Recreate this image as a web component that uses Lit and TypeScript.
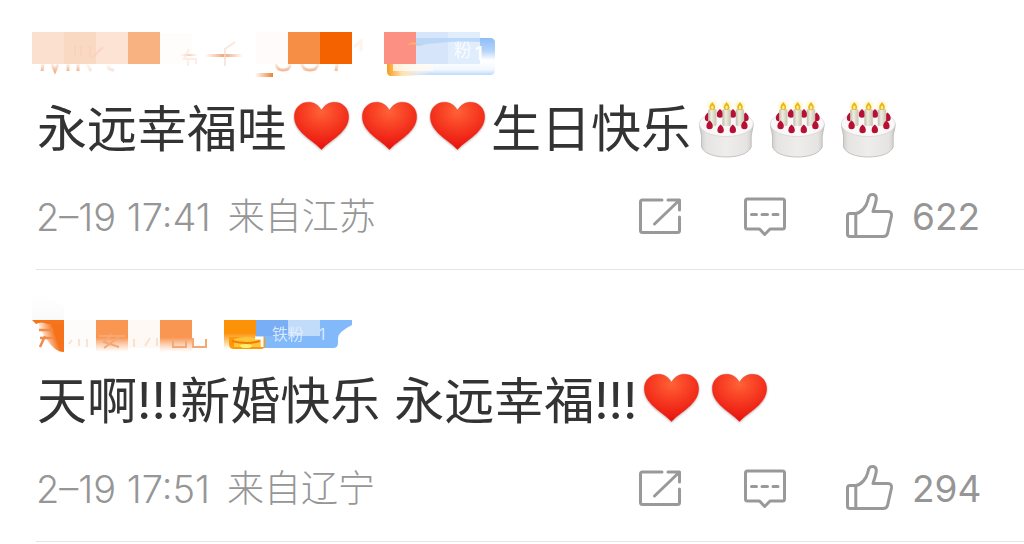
import { LitElement, html, svg, css } from "lit";
import { customElement, property } from "lit/decorators.js";

type Part = string | { emoji: "heart" | "cake"; count: number };

interface Comment {
  author: "first" | "second";
  parts: Part[];
  time: string;
  place: string;
  likes: number;
}

const comments: Comment[] = [
  {
    author: "first",
    parts: ["永远幸福哇", { emoji: "heart", count: 3 }, "生日快乐", { emoji: "cake", count: 3 }],
    time: "2–19 17:41",
    place: "来自江苏",
    likes: 622,
  },
  {
    author: "second",
    parts: ["天啊!!!新婚快乐 永远幸福!!!", { emoji: "heart", count: 2 }],
    time: "2–19 17:51",
    place: "来自辽宁",
    likes: 294,
  },
];

const heart = () => html`<svg class="emoji heart" viewBox="0 0 68 66" role="img" aria-label="红心">
    <defs>
      <radialGradient id="h" cx="0.5" cy="0.2" r="0.75">
        <stop offset="0" stop-color="#ff6236" />
        <stop offset="0.5" stop-color="#f63a22" />
        <stop offset="1" stop-color="#e9150f" />
      </radialGradient>
      <filter id="s" x="-10%" y="-10%" width="120%" height="125%">
        <feDropShadow dx="0" dy="1" stdDeviation="0.8" flood-color="#000" flood-opacity="0.3" />
      </filter>
    </defs>
    <path filter="url(#s)" fill="url(#h)" stroke="#d9261a" stroke-opacity="0.6" stroke-width="0.6"
      d="M34.500 14.500C31.500 8.500 26.500 6.200 21.500 6.200 13 6.200 7.300 12.500 7.300 20.500 7.300 36 25 43.500 34.500 53.500 44 43.500 61.700 36 61.700 20.500 61.700 12.500 56 6.200 47.500 6.200 42.500 6.200 37.500 8.500 34.500 14.500Z" />
  </svg>`;

const cherry = (x: number, y: number) => svg`
  <path fill="#b80f35" d="M${x} ${y - 4.5}C${x + 2} ${y - 3} ${x + 3.2} ${y - 1} ${x + 3.2} ${y + 1}A3.200 3.200 0 0 1 ${x - 3.2} ${y + 1}C${x - 3.2} ${y - 1} ${x - 2} ${y - 3} ${x} ${y - 4.5}Z" />`;

const candle = (x: number) => svg`
  <circle cx=${x} cy="10" r="7" fill="url(#g)" />
  <rect x=${x - 4.2} y="13" width="8.400" height="17" rx="1.500" fill="url(#w)" />
  <path fill="#e9b51c" d="M${x} 6C${x + 2} 8.500 ${x + 2.8} 10 ${x + 2.8} 11.200A2.800 2.800 0 0 1 ${x - 2.8} 11.200C${x - 2.8} 10 ${x - 2} 8.500 ${x} 6Z" />
  <ellipse cx=${x} cy="11.500" rx="1.200" ry="2" fill="#ffee86" />`;

const cake = () => html`<svg class="emoji cake" viewBox="0 0 71 66" role="img" aria-label="蛋糕">
    <defs>
      <linearGradient id="b" x1="0" x2="1">
        <stop offset="0" stop-color="#c9c7c4" />
        <stop offset="0.12" stop-color="#e6e4e2" />
        <stop offset="0.5" stop-color="#efedeb" />
        <stop offset="0.88" stop-color="#e6e4e2" />
        <stop offset="1" stop-color="#c9c7c4" />
      </linearGradient>
      <linearGradient id="w" x1="0" x2="1">
        <stop offset="0" stop-color="#bfbcab" />
        <stop offset="0.4" stop-color="#efeddf" />
        <stop offset="1" stop-color="#c6c3b1" />
      </linearGradient>
      <radialGradient id="g">
        <stop offset="0" stop-color="#ffe873" stop-opacity="0.8" />
        <stop offset="1" stop-color="#fff3a8" stop-opacity="0" />
      </radialGradient>
    </defs>
    <path fill="url(#b)" stroke="#b9b6b4" stroke-width="0.8"
      d="M8.500 28C8.500 32 10 36 10.500 40V51C13 57.500 23 61 35.300 61S57.500 57.500 60.200 51V40C60.700 36 62.200 32 62.200 28Z" />
    <ellipse cx="35.300" cy="28" rx="27" ry="12.500" fill="#f9f8f8" stroke="#d5d3d2" stroke-width="0.7" />
    ${cherry(17, 21)}${cherry(29, 17.5)}${cherry(42, 17.5)}${cherry(54.5, 21)}
    ${candle(21.3)}${candle(35.6)}${candle(49)}
    ${cherry(18.6, 29)}${cherry(29.6, 33)}${cherry(41.8, 33)}${cherry(53.4, 29)}
  </svg>`;

const firstAuthor = () => html`
  <svg class="mosaic" viewBox="32 16 512 64" role="img" aria-label="用户昵称已打码">
    <defs>
      <linearGradient id="badge" x1="0" x2="0" y1="0" y2="1">
        <stop offset="0" stop-color="#8ebdf5" />
        <stop offset="0.35" stop-color="#b5d4f9" />
        <stop offset="0.6" stop-color="#ffffff" />
        <stop offset="0.85" stop-color="#f2f8ff" />
        <stop offset="1" stop-color="#bedaf9" />
      </linearGradient>
      <linearGradient id="gold" x1="0" x2="1">
        <stop offset="0" stop-color="#f79b1f" />
        <stop offset="0.35" stop-color="#ffe2ae" />
        <stop offset="1" stop-color="#fff" stop-opacity="0" />
      </linearGradient>
      <linearGradient id="dash" x1="0" x2="1">
        <stop offset="0" stop-color="#f0a77b" stop-opacity="0" />
        <stop offset="0.5" stop-color="#f0a77b" />
        <stop offset="1" stop-color="#f0a77b" stop-opacity="0" />
      </linearGradient>
      <linearGradient id="under" x1="0" x2="1">
        <stop offset="0" stop-color="#ec8038" stop-opacity="0" />
        <stop offset="1" stop-color="#ec8038" />
      </linearGradient>
      <linearGradient id="smear" gradientUnits="userSpaceOnUse" x1="0" x2="0" y1="63" y2="71">
        <stop offset="0" stop-color="#f6bd98" stop-opacity="0.1" />
        <stop offset="1" stop-color="#f4b48c" />
      </linearGradient>
    </defs>
    <g fill="none" stroke="url(#smear)" stroke-width="3">
      <path d="M42 71L43 64M52 64L55 71L58 64M68 71L68 64M78 71L78 64" />
      <path d="M87 64L91 71M108 65Q108 70 114 70" opacity="0.4" />
      <path d="M276 64Q277 70 283 70Q290 70 290 64M302 64Q303 70 310 70Q317 70 318 64M336 71L337 64" />
    </g>
    <rect x="32" y="32" width="32" height="32" fill="#fbdfcf" />
    <rect x="64" y="32" width="32" height="32" fill="#fad9c2" />
    <rect x="96" y="32" width="32" height="32" fill="#fde3d4" />
    <rect x="128" y="32" width="32" height="32" fill="#f8b180" />
    <rect x="160" y="33" width="32" height="31" fill="#fffdfc" />
    <path d="M75 46V56M81 46V56M90 46V57M103 47L92 58" fill="none" stroke="#f8cdb2" stroke-width="2" opacity="0.6" />
    <rect x="180" y="54" width="18" height="2" fill="url(#dash)" opacity="0.5" />
    <path d="M189 49L184 59H196V64M188 60V66" fill="none" stroke="#fae3d6" stroke-width="2" opacity="0.6" />
    <rect x="205" y="54" width="38" height="3" fill="url(#dash)" />
    <path d="M235 42L225 49V66" fill="none" stroke="#f8dccb" stroke-width="2" opacity="0.7" />
    <rect x="255" y="73" width="18" height="4" fill="url(#under)" />
    <rect x="256" y="32" width="32" height="32" fill="#fffbfb" />
    <rect x="288" y="32" width="32" height="32" fill="#f78e45" />
    <rect x="320" y="32" width="32" height="32" fill="#f46200" />
    <path d="M354 47L361 41V51" fill="none" stroke="#fef4ee" stroke-width="3" />
    <path d="M387 38H490Q495 38 495 43V70Q495 75 490 75H392Q387 75 387 70Z" fill="url(#badge)" />
    <path d="M387 62H430V76H391Q387 76 387 71Z" fill="url(#gold)" />
    <rect x="393" y="60" width="40" height="11" fill="#fffaf3" opacity="0.8" />
    <rect x="384" y="32" width="32" height="32" fill="#fc9082" />
    <rect x="416" y="32" width="32" height="32" fill="#d6e5fa" />
    <rect x="448" y="32" width="32" height="32" fill="#e0edfd" />
    <path d="M407 45Q414 39 422 46Q414 43 407 45Z" fill="#ffb26b" />
    <path d="M416 38H480V42Q448 40 416 46Z" fill="#b4d3f8" opacity="0.8" />
    <g fill="#fff" font-size="18">
      <text x="454" y="57" font-family="Noto Sans CJK SC, sans-serif" opacity="0.8">粉</text>
      <text x="475" y="60" font-family="Inter, sans-serif" font-weight="600">1</text>
    </g>
  </svg>`;

const secondAuthor = () => html`
  <svg class="mosaic" viewBox="32 16 512 64" role="img" aria-label="用户昵称已打码">
    <defs>
      <linearGradient id="o" x1="0" x2="0" y1="0" y2="1">
        <stop offset="0.55" stop-color="#f99652" />
        <stop offset="1" stop-color="#fbb382" stop-opacity="0" />
      </linearGradient>
      <linearGradient id="y" x1="0" x2="0" y1="0" y2="1">
        <stop offset="0" stop-color="#fb9208" />
        <stop offset="0.45" stop-color="#fb9208" />
        <stop offset="1" stop-color="#fb9208" stop-opacity="0" />
      </linearGradient>
      <linearGradient id="r" x1="0" x2="1" y1="0.7" y2="0.3">
        <stop offset="0.1" stop-color="#f5721a" stop-opacity="0" />
        <stop offset="0.65" stop-color="#f5721a" />
      </linearGradient>
      <linearGradient id="f" x1="0" x2="0" y1="0" y2="1">
        <stop offset="0" stop-color="#fff" />
        <stop offset="1" stop-color="#fafafa" />
      </linearGradient>
    </defs>
    <path d="M32 20L64 34V48H32Z" fill="url(#f)" />
    <rect x="64" y="48" width="32" height="28" fill="#fefcfa" />
    <rect x="128" y="48" width="32" height="28" fill="#fef9f5" />
    <path d="M39 48H64V80C57 80 52 75 48 69L39 56Z" fill="url(#r)" />
    <path d="M32 48H64V52H48Q41 49 36 52Z" fill="#f5741c" />
    <path d="M39 58H53M40 66H54M45 64L40 75" stroke="#f28a48" stroke-width="2.500" fill="none" />
    <rect x="96" y="48" width="32" height="32" fill="url(#o)" />
    <rect x="160" y="48" width="32" height="32" fill="url(#o)" />
    <g fill="none" stroke="#f5a873" stroke-width="2">
      <path d="M99 64H125M112 62L104 70L119 75M119 65L104 76" />
      <path d="M173 66V76M173 75H186M186 67V76M193 66V76M193 75H206M206 67V76" />
      <path d="M79 67V74M87 67V75M72 68L69 72M134 67V75M150 66L145 74M157 66V74" opacity="0.3" />
    </g>
    <path d="M256 48H352V53Q338 60 338 66V71Q338 76 333 76H264L256 68Z" fill="#82b9fa" />
    <rect x="256" y="48" width="32" height="16" fill="#77aef5" />
    <rect x="288" y="48" width="32" height="16" fill="#c1dbfb" />
    <rect x="224" y="48" width="32" height="29" fill="url(#y)" />
    <path d="M229 65H265V73Q265 77 261 77H234Q229 77 229 72Z" fill="#ff9905" />
    <path d="M234 67Q247 63 260 67V75H234Z" fill="#ffc53a" />
    <ellipse cx="246" cy="74" rx="6" ry="2" fill="#fff06a" />
    <path d="M232 69Q247 73 260 69" stroke="#f47b00" stroke-width="2" fill="none" />
    <path d="M255 66H262V75" stroke="#fff" stroke-width="3" fill="none" />
    <g fill="#e6f1fe" font-size="16" opacity="0.85">
      <text x="272" y="68" font-family="Noto Sans CJK SC, sans-serif">铁粉</text>
      <text x="319" y="68" font-family="Inter, sans-serif">1</text>
    </g>
  </svg>`;

@customElement("comment-item")
class CommentItem extends LitElement {
  @property({ attribute: false }) comment!: Comment;

  static styles = css`
    :host {
      display: block;
      font-family: Inter, "Noto Sans CJK SC", sans-serif;
    }
    .mosaic {
      display: block;
      width: 512px;
      height: 64px;
      margin-left: 32px;
    }
    .body {
      margin: 16px 37px 0;
      font-size: 50px;
      line-height: 66px;
      color: #333;
      font-weight: 400;
    }
    .emoji {
      display: inline-block;
      vertical-align: top;
      height: 66px;
    }
    .heart {
      width: 68px;
    }
    .cake {
      width: 71px;
    }
    .footer {
      display: flex;
      align-items: center;
      min-height: 56px;
      margin: 27px 0 0 36px;
      padding: 0 42px 24px 0;
      border-bottom: 1px solid #e4e4e4;
      color: #969696;
    }
    .meta {
      display: flex;
      align-items: center;
      gap: 17px;
      font-size: 37px;
      line-height: 56px;
      font-weight: 300;
    }
    .time {
      font-size: 38px;
    }
    .actions {
      display: flex;
      align-items: center;
      gap: 57px;
      margin-left: auto;
    }
    .action {
      display: flex;
      align-items: center;
      gap: 18px;
      padding: 0;
      border: 0;
      background: none;
      color: inherit;
      font: inherit;
      font-size: 37px;
      line-height: 48px;
      cursor: pointer;
    }
    .icon {
      display: block;
      width: 48px;
      height: 48px;
      overflow: visible;
      fill: none;
      stroke: #999;
      stroke-width: 3;
      stroke-linecap: round;
      stroke-linejoin: round;
    }
    .count {
      min-width: 70px;
      text-align: left;
    }
  `;

  render() {
    const c = this.comment;
    return html`
      <article>
        ${c.author === "first" ? firstAuthor() : secondAuthor()}
        <div class="body">${c.parts.map((p) =>
          typeof p === "string"
            ? p
            : Array.from({ length: p.count }, () => (p.emoji === "heart" ? heart() : cake()))
        )}</div>
        <div class="footer">
          <div class="meta"><time class="time">${c.time}</time><span>${c.place}</span></div>
          <div class="actions">
            <button class="action" type="button" aria-label="转发">
              <svg class="icon" viewBox="0 0 48 48">
                <path d="M26 7H6.500Q4.500 7 4.500 9V37.500Q4.500 39.500 6.500 39.500H41.500Q43.500 39.500 43.500 37.500V24" />
                <path d="M32 7H43.500V17M43 7.500L18.500 31" />
              </svg>
            </button>
            <button class="action" type="button" aria-label="评论">
              <svg class="icon" viewBox="0 0 48 48">
                <path d="M6.500 6H41.500Q43.500 6 43.500 8V34Q43.500 36 41.500 36H29L23.700 41.500L18.500 36H6.500Q4.500 36 4.500 34V8Q4.500 6 6.500 6Z" />
                <path d="M10.500 21.500H15.500M21 21.500H26.500M32 21.500H37" />
              </svg>
            </button>
            <button class="action" type="button" aria-label="赞 ${c.likes}">
              <svg class="icon" viewBox="0 0 48 48">
                <path d="M9.800 20.500H4Q1.500 20.500 1.500 23V41Q1.500 43.500 4 43.500H37.500Q40.500 43.500 41.500 40.500L45.500 23Q46 18.500 42 18.500H27C28.500 13.500 30.300 9 30.300 5.500 30.300 2.500 28.500 1.500 26.300 1.500 23 1.500 22.500 4 21.800 7.500 20.500 13.500 15.500 19.500 9.800 20.500V43" />
              </svg>
              <span class="count">${c.likes}</span>
            </button>
          </div>
        </div>
      </article>
    `;
  }
}

@customElement("app-root")
class AppRoot extends LitElement {
  static styles = css`
    :host {
      display: block;
      background: #fff;
    }
    .item {
      padding-top: 18px;
    }
    .item:first-child {
      padding-top: 16px;
    }
  `;

  render() {
    return html`<main>
      ${comments.map((c) => html`<comment-item class="item" .comment=${c}></comment-item>`)}
    </main>`;
  }
}
